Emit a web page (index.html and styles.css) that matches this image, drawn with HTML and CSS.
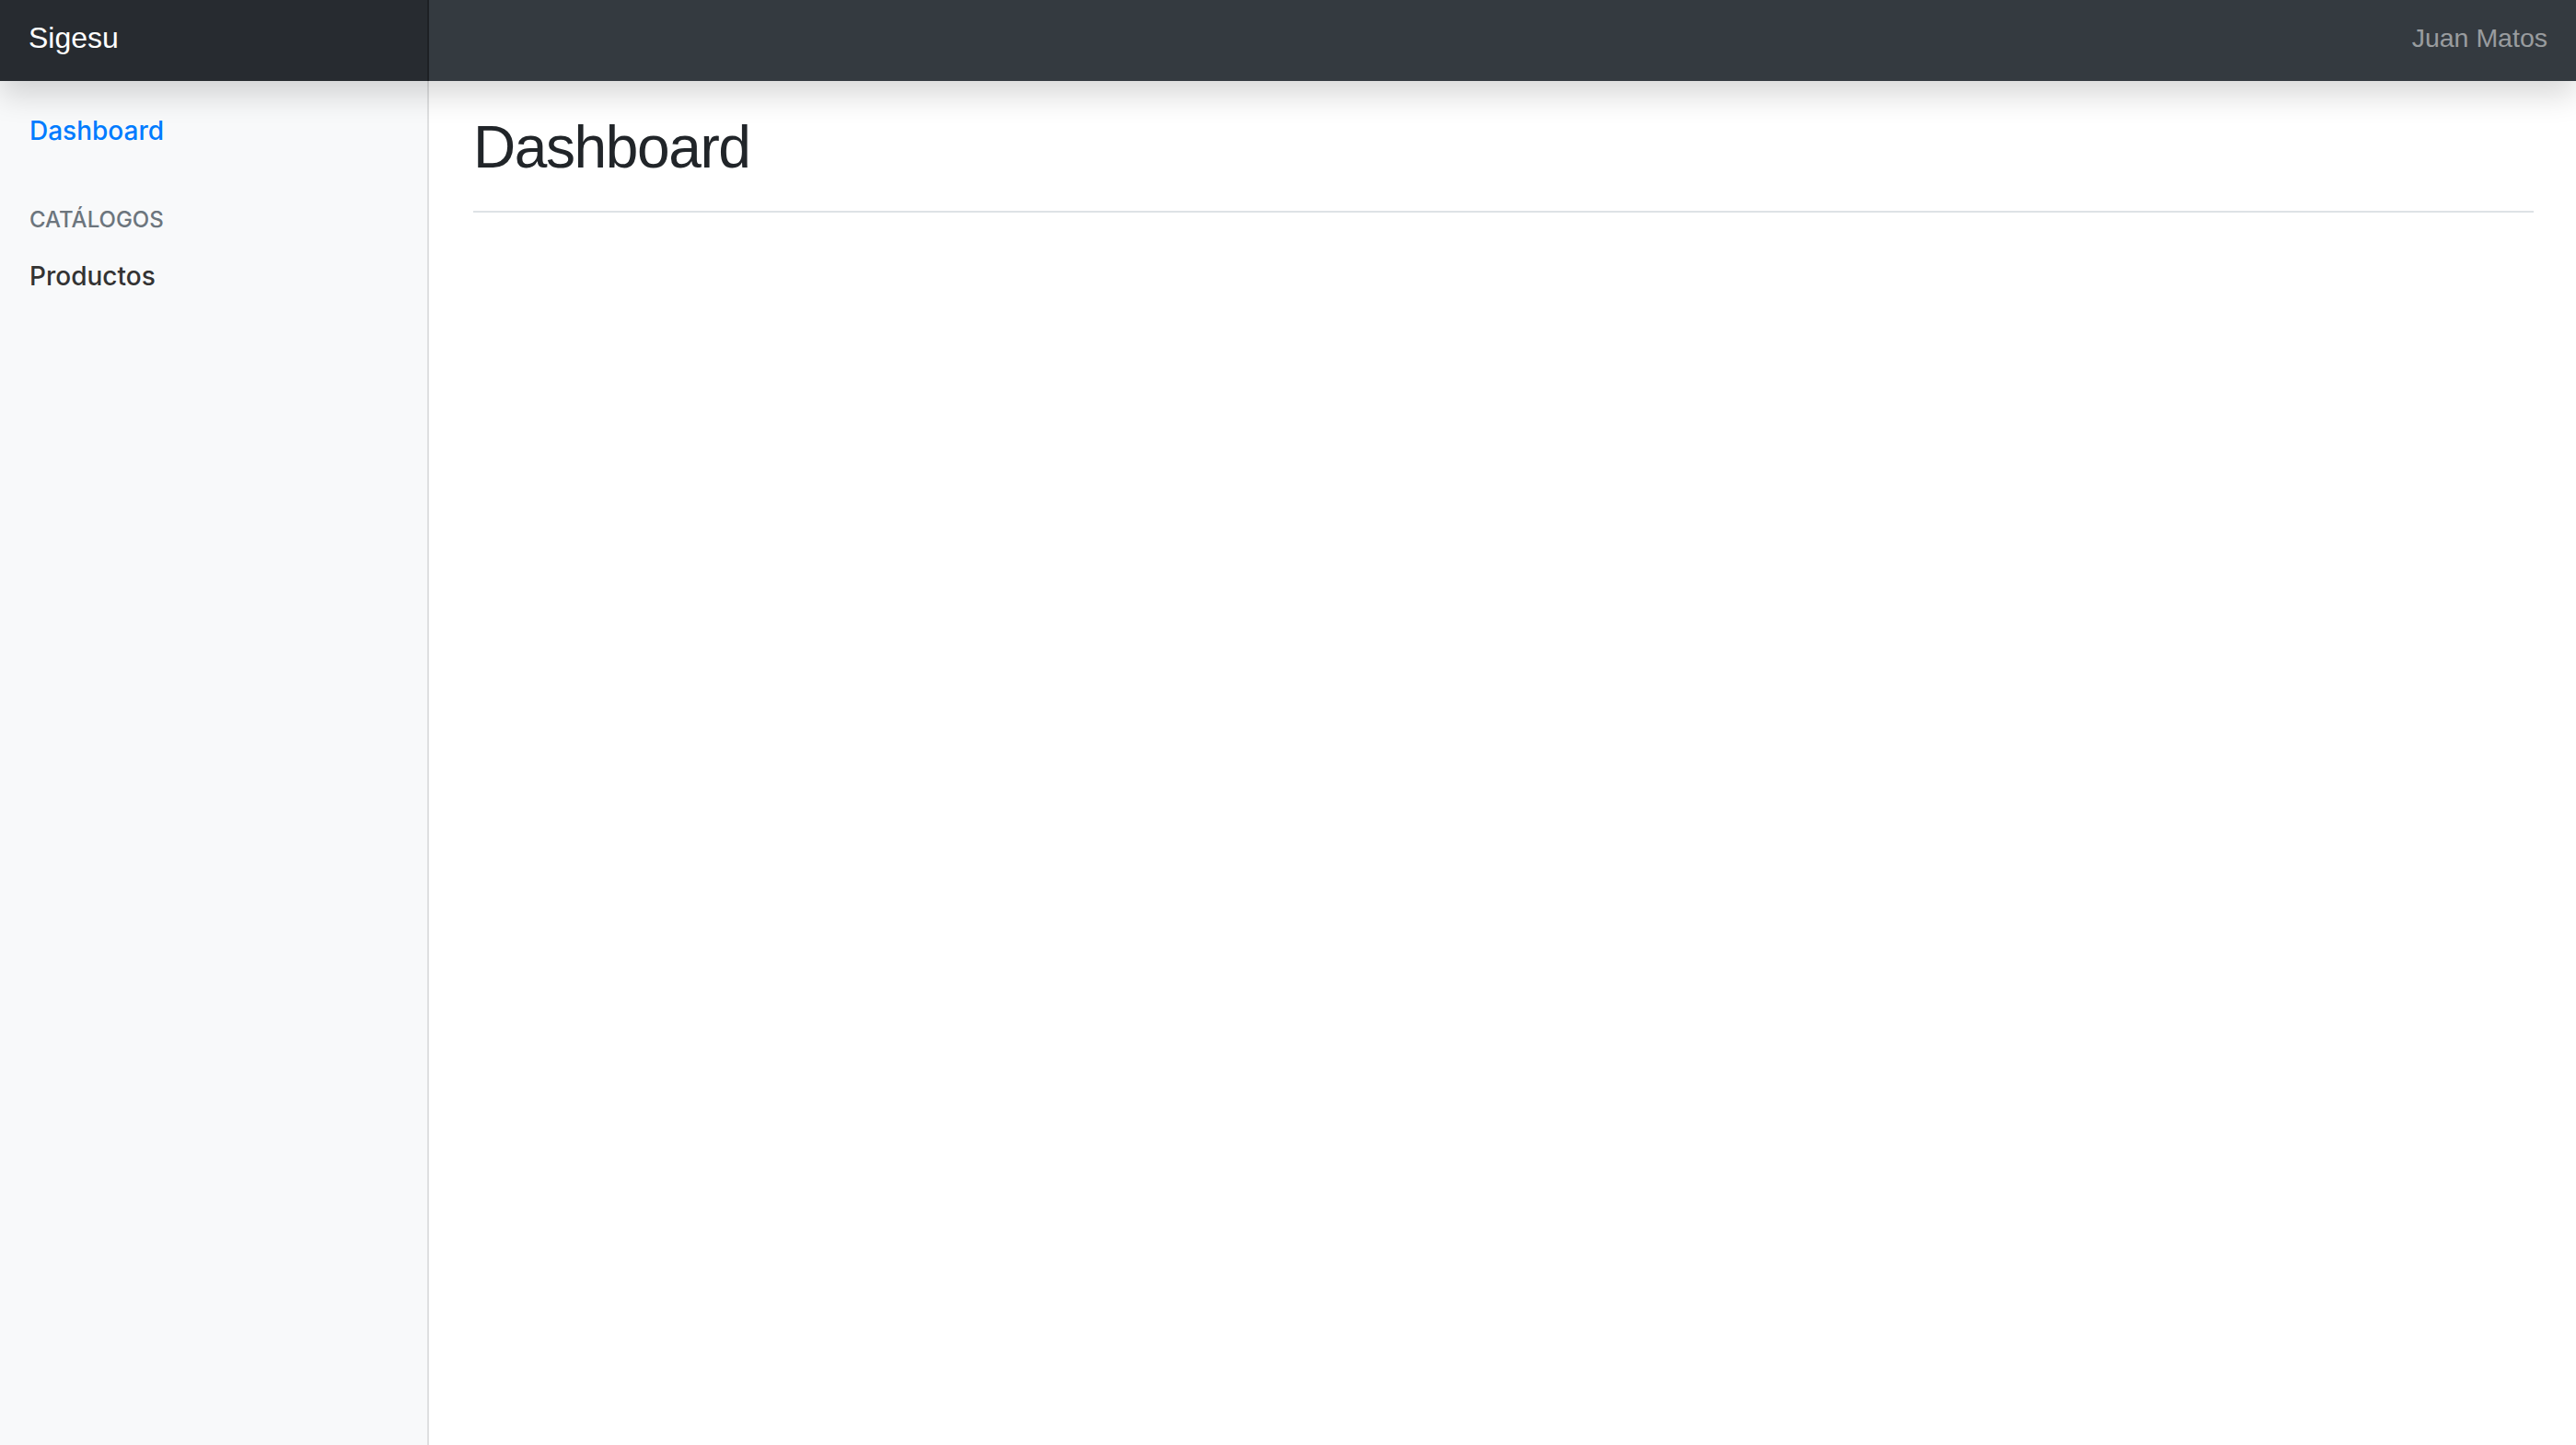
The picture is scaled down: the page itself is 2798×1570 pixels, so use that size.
FILE: index.html
```html
<!DOCTYPE html>
<html lang="es">
<head>
<meta charset="utf-8">
<title>Sigesu - Dashboard</title>
<link rel="stylesheet" href="styles.css">
</head>
<body>
<header class="navbar">
  <a class="brand" href="#">Sigesu</a>
  <a class="user" href="#">Juan Matos</a>
</header>
<div class="layout">
  <nav class="sidebar">
    <ul class="nav">
      <li><a class="nav-link active" href="#">Dashboard</a></li>
    </ul>
    <h6 class="sidebar-heading">Catálogos</h6>
    <ul class="nav">
      <li><a class="nav-link" href="#">Productos</a></li>
    </ul>
  </nav>
  <main class="main">
    <div class="page-header">
      <h2 class="page-title">Dashboard</h2>
    </div>
  </main>
</div>
</body>
</html>
```

FILE: styles.css
```css
* { box-sizing: border-box; }

html, body {
  margin: 0;
  padding: 0;
  height: 100%;
}

body {
  font-family: "Liberation Sans", Arial, sans-serif;
  color: #212529;
  background: #fff;
}

a { text-decoration: none; }

.navbar {
  position: relative;
  z-index: 2;
  display: flex;
  justify-content: space-between;
  align-items: flex-start;
  height: 88px;
  background: #343a40;
  box-shadow: 0 16px 32px rgba(0, 0, 0, 0.15);
}

.brand {
  display: block;
  width: 466px;
  height: 88px;
  padding: 17px 31px 0;
  font-size: 32px;
  line-height: 48px;
  color: #fff;
  background: rgba(0, 0, 0, 0.25);
  box-shadow: inset -2px 0 0 rgba(0, 0, 0, 0.25);
}

.user {
  display: block;
  padding: 20px 31px 0;
  font-size: 28.5px;
  line-height: 42px;
  color: rgba(255, 255, 255, 0.5);
}

.layout {
  display: flex;
  min-height: calc(100% - 88px);
}

.sidebar {
  width: 466px;
  flex: 0 0 466px;
  padding-top: 17px;
  background: #f8f9fa;
  box-shadow: inset -2px 0 0 rgba(0, 0, 0, 0.1);
}

.nav {
  list-style: none;
  margin: 0;
  padding: 0;
}

.nav-link {
  display: block;
  padding: 16px 32px;
  font-family: Inter, "Liberation Sans", sans-serif;
  font-size: 28px;
  line-height: 42px;
  font-weight: 500;
  color: #333;
}

.nav-link.active {
  color: #007bff;
}

.sidebar-heading {
  margin: 42px 0 6px;
  padding: 0 32px;
  font-family: Inter, "Liberation Sans", sans-serif;
  font-size: 24px;
  line-height: 36px;
  font-weight: 500;
  text-transform: uppercase;
  color: #6c757d;
}

.main {
  flex: 1;
  padding: 34px 46px 0 48px;
}

.page-header {
  display: flex;
  align-items: center;
  padding-bottom: 14px;
  border-bottom: 2px solid #dee2e6;
}

.page-title {
  margin: 0 0 16px;
  font-size: 64px;
  line-height: 76.8px;
  font-weight: 400;
  letter-spacing: -1.4px;
  color: #212529;
}
```
